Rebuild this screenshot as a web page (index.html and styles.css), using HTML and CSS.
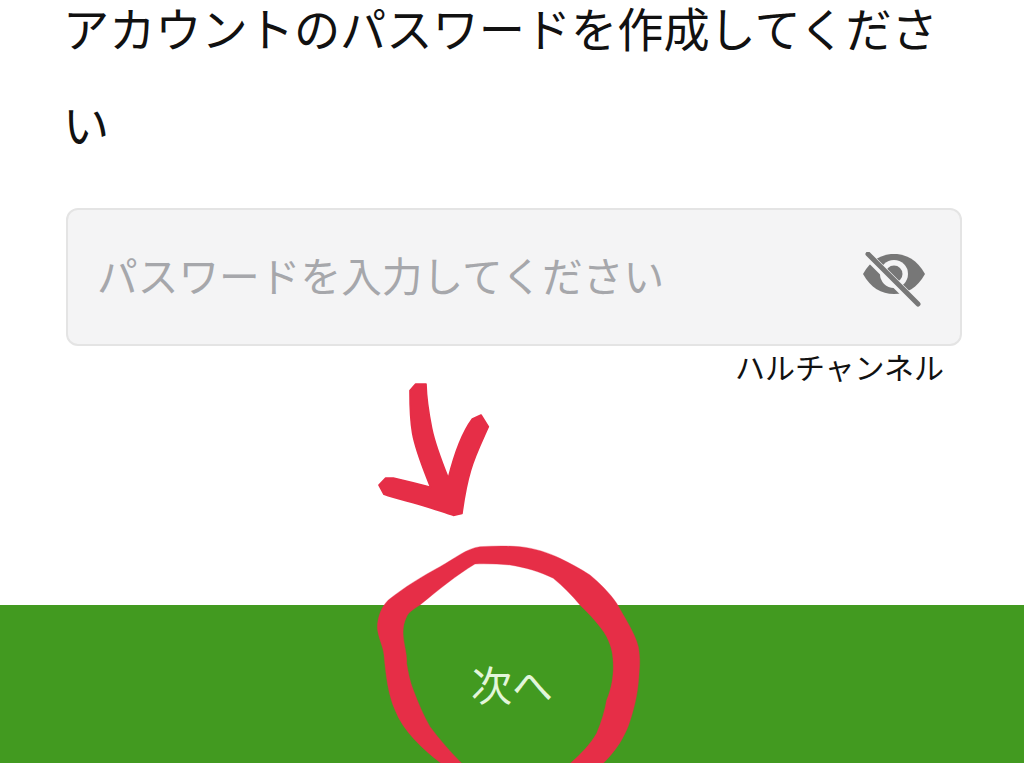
FILE: index.html
```html
<!DOCTYPE html>
<html lang="ja">
<head>
    <meta charset="UTF-8">
    <meta name="viewport" content="width=device-width, initial-scale=1.0">
    <title>パスワード作成</title>
    <link rel="stylesheet" href="styles.css">
</head>
<body>
    <main class="page">
        <div class="content">
            <h1 class="title">アカウントのパスワードを作成してください</h1>
            <form class="password-field">
                <input class="password-input" type="password" placeholder="パスワードを入力してください">
                <button class="eye-button" type="button" aria-label="パスワードを表示">
                    <svg width="66" height="56" viewBox="0 0 66 56">
                        <path fill="#777" d="M2 22C10 8 20 2 33 2s23 6 31 20c-8 14-18 20-31 20S10 36 2 22z"/>
                        <circle cx="33" cy="22" r="14" fill="#f4f4f5"/>
                        <circle cx="33" cy="22" r="8.5" fill="#777"/>
                        <path stroke="#f4f4f5" stroke-width="9" d="M5 2l50 50"/>
                        <path stroke="#777" stroke-width="5" stroke-linecap="round" d="M7 2l50 50"/>
                    </svg>
                </button>
            </form>
            <p class="channel-name">ハルチャンネル</p>
        </div>
        <button class="next-button" type="button">次へ</button>

        <!-- 赤い手書きの矢印と丸 -->
        <svg class="markup" width="1024" height="763" viewBox="0 0 1024 763">
            <g transform="translate(360 370) scale(0.3333)" fill="#e62e47" stroke="#e62e47" stroke-linejoin="round">
                <path stroke-width="5" d="M150 62L167 42H198C199 85 205 125 215 175C225 225 245 275 265 325C280 265 305 190 337 147L363 135L385 170C365 215 345 255 332 300C320 340 312 385 306 430L280 436C245 425 205 410 160 398C130 390 100 383 72 373L57 345L77 324H100C135 332 175 342 212 352C190 295 168 245 158 190C150 145 150 105 150 62z"/>
                <path stroke-width="1" d="M250 1185C190 1140 130 1085 105 1020C85 975 78 920 72 855C70 830 55 805 52 775C52 740 65 710 85 690C135 650 185 620 240 590C285 565 320 535 360 530C400 528 440 527 480 530C525 535 565 548 600 565C630 580 660 595 690 615C720 640 750 670 770 700C795 745 825 790 835 830C840 860 840 880 838 900C836 940 832 970 825 1000C815 1040 805 1075 790 1100C775 1130 750 1160 725 1185H625C660 1155 690 1125 710 1090C725 1055 735 1020 740 990C755 955 760 920 760 890C760 855 755 830 740 800C720 765 690 735 660 705C635 675 610 650 580 625C540 605 495 592 450 585C415 582 380 581 345 582C290 615 235 660 180 705C160 718 145 728 140 740C130 760 128 780 130 800C132 825 142 855 140 880C145 910 150 935 160 960C175 1000 190 1035 210 1070C240 1110 275 1150 310 1185z"/>
            </g>
        </svg>
    </main>
</body>
</html>
```

FILE: styles.css
```css
* {
    box-sizing: border-box;
}

body {
    margin: 0;
    background-color: #fff;
    font-family: "Noto Sans CJK JP", "Liberation Sans", sans-serif;
}

.page {
    position: relative;
    display: flex;
    flex-direction: column;
    height: 763px;
    overflow: hidden;
}

.content {
    padding: 0 62px 0 66px;
}

.title {
    margin: -21px 0 37px -3px;
    font-size: 46.2px;
    font-weight: 400;
    line-height: 96px;
    color: #111;
}

.password-field {
    display: flex;
    align-items: center;
    height: 138px;
    padding: 0 29px;
    background-color: #f4f4f5;
    border: 2px solid #e4e4e4;
    border-radius: 12px;
}

.password-input {
    flex: 1;
    min-width: 0;
    margin-bottom: 6px;
    padding: 0;
    border: none;
    outline: none;
    background: none;
    font-family: inherit;
    font-size: 40.7px;
}

.password-input::placeholder {
    color: #a6a7ab;
}

.eye-button {
    display: flex;
    margin: 5px 4px 0 0;
    padding: 0;
    border: none;
    background: none;
}

.channel-name {
    margin: 0 18px 0 0;
    font-size: 30px;
    line-height: 40px;
    text-align: right;
    color: #111;
}

.next-button {
    margin-top: auto;
    height: 158px;
    padding: 0 0 3px;
    border: none;
    background-color: #429a20;
    color: #e2f6da;
    font-family: inherit;
    font-size: 41px;
}

.markup {
    position: absolute;
    top: 0;
    left: 0;
    pointer-events: none;
}
```
